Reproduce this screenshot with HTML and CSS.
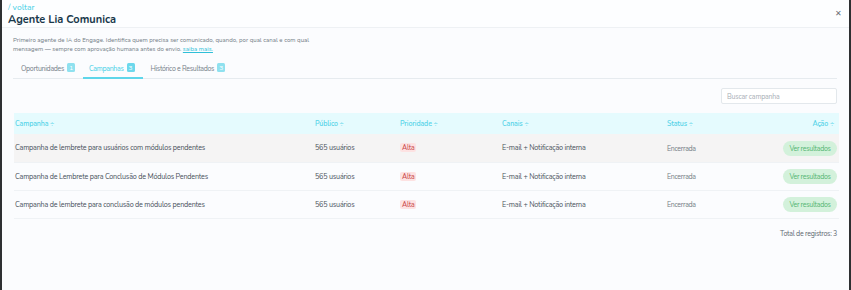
FILE: index.html
```html
<!DOCTYPE html>
<html lang="pt-BR">
<head>
<meta charset="utf-8">
<title>Agente Lia Comunica</title>
<link rel="stylesheet" href="styles.css">
</head>
<body>
<div class="modal">
  <header class="head">
    <div class="head-text">
      <a class="back" href="#">/ voltar</a>
      <h1 class="title">Agente Lia Comunica</h1>
    </div>
    <button class="close" type="button">&#x2715;</button>
  </header>
  <div class="content">
    <p class="desc">Primeiro agente de IA do Engage. Identifica quem precisa ser comunicado, quando, por qual canal e com qual<br>mensagem — sempre com aprovação humana antes do envio. <a class="more" href="#">saiba mais.</a></p>
    <nav class="tabs">
      <span class="tab">Oportunidades <span class="count">1</span></span>
      <span class="tab active">Campanhas <span class="count">3</span></span>
      <span class="tab">Histórico e Resultados <span class="count">3</span></span>
    </nav>
    <div class="toolbar">
      <input class="search" type="text" placeholder="Buscar campanha">
    </div>
    <table class="grid">
      <colgroup>
        <col class="c-camp"><col class="c-pub"><col class="c-pri"><col class="c-can"><col class="c-sta"><col>
      </colgroup>
      <thead>
        <tr>
          <th>Campanha ÷</th>
          <th>Público ÷</th>
          <th>Prioridade ÷</th>
          <th>Canais ÷</th>
          <th>Status ÷</th>
          <th class="right">Ação ÷</th>
        </tr>
      </thead>
      <tbody>
        <tr class="hover">
          <td>Campanha de lembrete para usuários com módulos pendentes</td>
          <td>565 usuários</td>
          <td><span class="tag">Alta</span></td>
          <td>E-mail + Notificação interna</td>
          <td class="status">Encerrada</td>
          <td class="right"><button class="btn" type="button">Ver resultados</button></td>
        </tr>
        <tr>
          <td>Campanha de Lembrete para Conclusão de Módulos Pendentes</td>
          <td>565 usuários</td>
          <td><span class="tag">Alta</span></td>
          <td>E-mail + Notificação interna</td>
          <td class="status">Encerrada</td>
          <td class="right"><button class="btn" type="button">Ver resultados</button></td>
        </tr>
        <tr>
          <td>Campanha de lembrete para conclusão de módulos pendentes</td>
          <td>565 usuários</td>
          <td><span class="tag">Alta</span></td>
          <td>E-mail + Notificação interna</td>
          <td class="status">Encerrada</td>
          <td class="right"><button class="btn" type="button">Ver resultados</button></td>
        </tr>
      </tbody>
    </table>
    <div class="total">Total de registros: 3</div>
  </div>
</div>
</body>
</html>
```
FILE: styles.css
```css
* { box-sizing: border-box; }
html, body { margin: 0; height: 100%; }
body {
  background: #2e3032;
  font-family: "Nunito", "Lato", "Open Sans", sans-serif;
  color: #3d4650;
  padding: 0 2px;
}
.modal {
  background: #fbfcfe;
  min-height: 100%;
}
.head {
  display: flex;
  justify-content: space-between;
  align-items: flex-start;
  padding: 2px 7px 0 6px;
  height: 28px;
  border-bottom: 1px solid #eef1f4;
  background: #fdfeff;
}
.head-text { display: flex; flex-direction: column; }
.back {
  color: #3fcfe6;
  font-size: 8.5px;
  text-decoration: none;
  line-height: 11px;
}
.title {
  margin: 0;
  font-size: 11px;
  font-weight: 700;
  color: #18384a;
  line-height: 13px;
}
.close {
  border: 0;
  background: none;
  color: #6a6f74;
  font-size: 8px;
  padding: 0;
  margin-top: 7px;
}
.content { padding: 8px 12px 0 11px; }
.desc {
  margin: 0;
  font-size: 6.1px;
  line-height: 9px;
  color: #737c86;
}
.more { color: #2fbfd8; text-decoration: underline; }
.tabs {
  display: flex;
  margin-top: 7px;
  border-bottom: 1px solid #e6ebef;
  height: 18px;
  font-size: 7px;
  letter-spacing: -0.3px;
  color: #757e88;
}
.tab {
  display: flex;
  align-items: flex-start;
  gap: 3px;
  padding: 3px 7px 0 8px;
  height: 18px;
  margin-bottom: -1px;
}
.tab.active {
  color: #3fcfe6;
  border-bottom: 2px solid #5ed6ea;
  margin-left: 1px;
  padding: 3px 8px 0 6px;
}
.count {
  background: #8fe1ef;
  color: #fff;
  font-size: 6.5px;
  letter-spacing: 0;
  line-height: 9px;
  min-width: 8px;
  text-align: center;
  border-radius: 1.5px;
  margin-top: -1px;
}
.tab.active .count { background: #6cd8ec; }
.toolbar {
  display: flex;
  justify-content: flex-end;
  padding-top: 9px;
}
.search {
  width: 116px;
  height: 16px;
  border: 1px solid #e3e8ec;
  border-radius: 2px;
  background: #fff;
  font: inherit;
  font-size: 7px;
  letter-spacing: -0.2px;
  padding: 0 5px;
  color: #555;
}
.search::placeholder { color: #a7aeb5; }
.grid {
  width: calc(100% + 1px);
  margin-top: 9px;
  margin-left: 1px;
  border-collapse: collapse;
  table-layout: fixed;
  font-size: 7.2px;
  letter-spacing: -0.2px;
}
.c-camp { width: 300px; }
.c-pub { width: 85px; }
.c-pri { width: 102px; }
.c-can { width: 165px; }
.c-sta { width: 90px; }
th {
  background: #e5fbfe;
  color: #55d3e8;
  font-weight: 600;
  text-align: left;
  height: 21px;
  padding: 0 1px;
  font-size: 7px;
  letter-spacing: -0.1px;
}
td {
  height: 28px;
  padding: 1px 1px 0;
  color: #48515b;
  border-bottom: 1px solid #eff2f5;
}
tr.hover td { background: #f5f4f4; }
.right { text-align: right; padding-right: 2px; }
th.right { padding-right: 5px; }
.status { color: #737c85; font-size: 7px; letter-spacing: -0.3px; }
.tag {
  display: inline-block;
  background: #fde2e2;
  color: #c74343;
  font-size: 7px;
  letter-spacing: -0.2px;
  line-height: 9px;
  padding: 0 2px;
  border-radius: 2px;
}
.btn {
  border: 0;
  background: #d3f1db;
  color: #52b571;
  font: inherit;
  font-size: 7px;
  letter-spacing: -0.3px;
  height: 15px;
  width: 54px;
  border-radius: 8px;
  padding: 0;
}
.total {
  text-align: right;
  font-size: 7px;
  letter-spacing: -0.25px;
  color: #5e6771;
  padding-top: 10px;
}
```
